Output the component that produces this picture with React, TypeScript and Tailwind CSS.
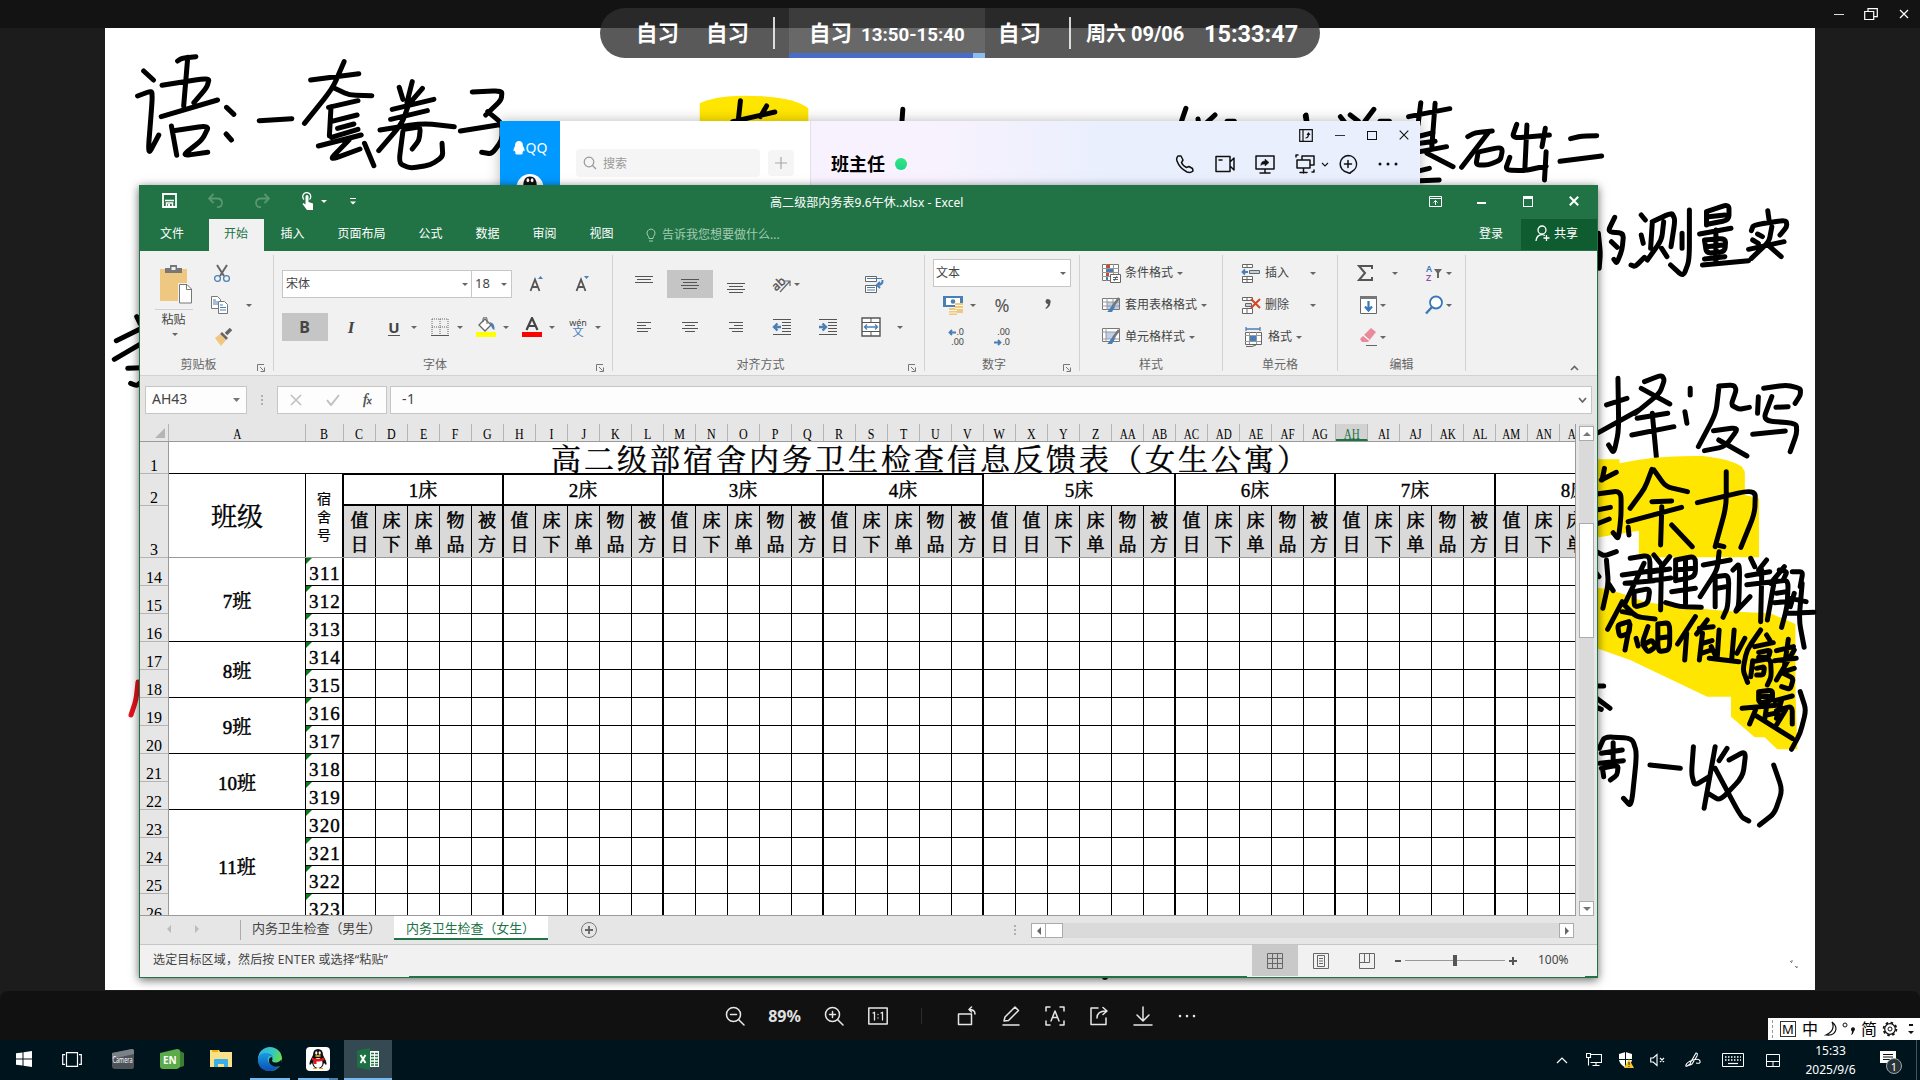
import React from "react";

const UI = "font-['Noto_Sans','Noto_Sans_CJK_SC',sans-serif]";
const SONG = "font-['Liberation_Serif','Noto_Serif_CJK_SC','Noto_Sans_CJK_SC',serif]";

/* ---------- handwriting ---------- */

function strokePath(s: string) {
  const p = s.split(" ").map((q) => q.split(",").map(Number));
  let d = `M${p[0][0]} ${p[0][1]}`;
  for (let i = 1; i < p.length - 1; i++) {
    const [a, b, c] = [p[i - 1], p[i], p[i + 1]];
    const k = 0.3;
    d += `L${b[0] + (a[0] - b[0]) * k} ${b[1] + (a[1] - b[1]) * k}`;
    d += `Q${b[0]} ${b[1]} ${b[0] + (c[0] - b[0]) * k} ${b[1] + (c[1] - b[1]) * k}`;
  }
  const e = p[p.length - 1];
  return d + `L${e[0]} ${e[1]}`;
}

function Ink({ list, color = "#000", width = 5 }: { list: string; color?: string; width?: number }) {
  return (
    <path
      d={list.split("|").map(strokePath).join("")}
      fill="none"
      stroke={color}
      strokeWidth={width}
      strokeLinecap="round"
      strokeLinejoin="round"
      vectorEffect="non-scaling-stroke"
    />
  );
}

const NOTE_LEFT = [
  "107,213 131,240|92,288 127,272 128,300 117,468 144,405|190,183 200,175 235,170|215,172 205,318|152,256 268,233 262,262 230,308|150,350 288,300|175,378 188,466|180,392 268,376 250,420 200,468 264,457",
  "310,322 328,343|309,402 322,420|390,362 470,356",
  "516,240 634,221|598,185 570,265 501,370|575,265 610,285 666,287|566,320 562,408|560,322 632,302|565,365 630,345|582,385 622,372|567,412 632,388|535,438 640,405|610,420 560,482 637,447|648,430 671,497",
  "733,262 742,298|765,245 752,308|790,265 760,308|716,328 818,298|712,358 802,332|760,300 740,370 683,452|686,390 790,370 868,380|745,388 785,380 782,420 765,447|742,395 732,490 760,505 810,495 840,470 838,430",
  "912,276 985,272 983,300 945,345|950,335 985,370 985,420 960,462 935,457|883,393 990,372",
  "40,1022 102,985|90,950 98,970|35,1078 102,1030|68,1105 102,1103|75,1150 90,1157 102,1145",
].join("|");

const NOTE_TOP =
  "331,302 326,368|385,318 372,350|315,365 402,336|666,328 664,368|1250,325 1240,368|1275,357 1276,368|1310,345 1293,368|1335,364 1350,364|1498,345 1500,368";

const NOTE_RIGHT = [
  "62,348 65,366|148,350 158,366|172,345 192,364|230,328 208,364|245,364 268,364",
  "345,308 338,375|380,310 372,440|315,350 416,326|343,408 375,398|343,455 408,440|343,430 380,424|360,460 424,500|343,512 366,505|343,542 390,540",
  "460,410 478,398 520,393|510,398 445,502|485,460 480,495 510,495 540,480 545,450 538,442 490,455",
  "580,373 568,415 660,405|605,375 600,505|650,385 642,440|563,472 552,510 600,512 652,498|652,455 648,540",
  "712,416 740,408 776,407|686,484 788,468",
  "820,652 803,695 842,700 838,750 825,790 818,778|812,725 826,742|780,700 785,760 782,805",
  "885,645 895,660|885,705 890,730|860,795 870,800 893,772|912,670 908,745|912,665 960,638 968,660 958,740|940,665 935,720 900,780|935,745 948,770|985,700 985,745|1003,630 1003,780 988,830 957,795",
  "1045,635 1045,675|1045,635 1100,612 1100,660 1050,672|1050,650 1090,645|1028,702 1105,685|1040,720 1045,760 1090,755 1092,715 1040,720|1045,740 1085,735|1068,690 1068,790|1040,777 1090,770|1035,795 1148,782",
  "1195,632 1198,658|1155,692 1160,675 1240,660 1242,680 1225,705|1170,702 1182,710|1158,720 1172,730|1205,680 1198,725 1155,775|1148,748 1235,725|1200,740 1228,770",
  "828,1135 830,1290 818,1360 805,1335|800,1215 850,1195|780,1298 880,1230|893,1145 935,1125 942,1140 930,1180 870,1240|885,1165 955,1212|875,1255 950,1240|862,1305 965,1280|912,1240 922,1370",
  "1005,1165 1005,1185|992,1235 997,1270|1075,1165 1068,1240 1025,1340|1075,1158 1112,1155 1118,1170 1105,1215 1125,1228 1150,1222|1062,1292 1125,1282 1090,1340 1040,1352|1075,1320 1144,1368",
  "1172,1190 1170,1240|1185,1165 1240,1155 1275,1165 1275,1185 1262,1210|1205,1190 1183,1262 1265,1270 1266,1300 1250,1355|1215,1222 1245,1220|1158,1303 1238,1293",
].join("|");

const NOTE_LOW = [
  "770,145 764,180|762,180 800,157|750,222 812,212 812,290 805,358 792,338|750,270 785,262|750,312 782,297",
  "890,148 872,205 835,265|895,150 925,200 980,215|890,245 940,243|830,305 965,262|915,260 912,375|830,322 832,345|940,315 992,380",
  "1078,155 1078,260 1050,380|1005,248 1152,207 1150,280 1115,382|1055,375 1072,380",
  "750,395 770,408 800,395|775,420 780,490 766,565|780,490 792,512|750,460 756,470",
  "835,415 885,405 885,480|815,465 905,450|822,490 895,482|870,430 820,555|845,515 885,505 880,550 845,562 845,515",
  "895,405 912,430|935,410 915,440|890,455 935,447|888,482 938,474|914,440 912,570",
  "950,420 950,482|950,420 1000,408 1000,470 950,482|950,450 995,445|975,415 975,550|940,515 1000,505|925,548 960,560 1015,562",
  "1020,435 1088,420|1060,395 1055,450 1012,530|1050,470 1050,560|1050,470 1085,465 1082,560 1070,592|1055,505 1078,500",
  "1095,450 1112,430 1110,555 1100,578 1138,530|1140,415 1150,440|1180,420 1160,450|1130,467 1188,455|1130,494 1195,485|1168,450 1165,605",
  "1225,440 1190,490|1212,450 1232,455 1222,480|1200,480 1182,600|1200,485 1235,480 1232,560 1218,622|1205,520 1230,515|1200,548 1230,545|1245,455 1272,455 1265,500|1250,520 1240,560|1240,535 1280,545|1235,580 1300,577|1270,490 1262,600 1275,682",
  "815,545 778,628|818,552 850,590 898,597|815,575 838,580",
  "832,605 803,615 808,650 832,640 835,608 830,640 822,690|850,655 855,678|880,620 865,670 880,697 900,680 890,660 868,675|905,612 905,695 935,690 935,608 905,612|905,655 932,650",
  "1000,590 955,672|978,640 973,720|1030,600 1003,642|1010,625 1045,620|1018,640 1010,720|1018,670 1042,662|1015,700 1040,690",
  "1060,630 1055,715|1098,630 1092,715|1040,680 1050,705|1125,655 1105,700|1035,715 1110,725",
  "1165,630 1130,690 1120,750 1132,787|1180,645 1188,660|1150,680 1197,668|1160,697 1190,690 1185,712 1160,712|1145,722 1140,770|1145,725 1190,715 1192,770 1182,795|1155,745 1175,740 1172,765 1155,765",
  "1235,658 1225,740|1205,692 1248,680|1200,722 1255,715|1250,690 1205,780|1218,757 1250,745|1222,760 1248,775 1240,808 1218,800",
  "1160,815 1160,850 1195,840 1195,810 1160,815|1165,830 1190,828|1118,865 1212,855|1180,860 1175,900|1152,870 1137,912|1150,885 1245,955|1200,842 1245,828|1218,840 1205,895|1205,872 1245,858 1245,912|1228,870 1205,915|1180,885 1200,880",
  "1265,815 1280,870 1265,940 1243,988|750,798 768,798|750,835 784,865|750,862 762,868",
  "757,985 770,950 840,955 852,1000 838,1160 818,1135|762,1000 815,990|792,968 792,1028|758,1030 818,1022|765,1045 768,1070|762,1045 805,1035 802,1065 785,1080",
  "885,1035 962,1045|995,980 990,1060 998,1097 1035,1070|1050,980 1022,1165|1080,985 1060,1022|1085,1020 1128,992 1120,1070 1062,1142 1032,1120|1050,1045 1115,1190 1135,1203",
  "1198,1035 1220,1110 1200,1180 1162,1215",
].join("|");

function Whiteboard() {
  return (
    <svg className="absolute left-0 top-0" width="1920" height="990" viewBox="0 0 1920 990">
      <g transform="translate(580 0) scale(0.48471 0.33333)">
        <path d="M247 370V310Q275 288 340 287Q440 288 471 325V370Z" fill="#ffe600" />
        <Ink list={NOTE_TOP} width={5} />
      </g>
      <g transform="translate(100 0) scale(0.40816 0.33333)">
        <Ink list={NOTE_LEFT} />
      </g>
      <g transform="translate(1280 0) scale(0.40816 0.33333)">
        <Ink list={NOTE_RIGHT} />
      </g>
      <g transform="translate(1300 420) scale(0.3954 0.33333)">
        <path d="M740 118H808V130Q900 105 1020 108Q1090 118 1118 140L1125 155V225L1161 235V412H857V332L740 355Z" fill="#ffe600" />
        <path d="M740 500Q800 510 870 545Q1000 570 1190 580L1253 612V810L1258 988H1207L1175 952H1150L1090 890V830H1030L835 720L740 680Z" fill="#ffe600" />
        <Ink list={NOTE_LOW} />
      </g>
      <Ink list="138,682 136,700 131,715" color="#e0141c" width={5} />
      <Ink list="1104,978 1106,978" width={3.5} />
      <path d="M1790 961l2 2M1795 966l2 2M1791 961h2M1797 966v2" stroke="#777" fill="none" />
    </svg>
  );
}

/* ---------- shared bits ---------- */

const Arrow = ({ c = "#666" }: { c?: string }) => (
  <svg width="6" height="3" viewBox="0 0 6 3" className="shrink-0">
    <path d="M0 0h6L3 3z" fill={c} />
  </svg>
);

const Lines = ({ rows, dy = 0 }: { rows: [number, number][]; dy?: number }) => (
  <svg width="20" height="20" viewBox="0 0 20 20">
    {rows.map(([x, w], i) => (
      <rect key={i} x={x} y={3 + dy + i * 3} width={w} height="1" fill="#555" />
    ))}
  </svg>
);

function I({ w = 20, h = 20, children }: { w?: number; h?: number; children: React.ReactNode }) {
  return (
    <svg width={w} height={h} viewBox={`0 0 ${w} ${h}`} fill="none" className="shrink-0">
      {children}
    </svg>
  );
}

const Cell = ({ children, on }: { children?: React.ReactNode; on?: boolean }) => (
  <div className={`flex h-7 w-[46px] shrink-0 items-center justify-center ${on ? "bg-[#c5c5c5]" : ""}`}>{children}</div>
);

const Drop = ({ children }: { children: React.ReactNode }) => (
  <div className="flex h-7 w-[46px] shrink-0 items-center pl-[5px]">
    <div className="flex w-[30px] justify-center">{children}</div>
    <div className="flex w-[10px] justify-center">
      <Arrow />
    </div>
  </div>
);

function Group({ label, width, launcher, children }: { label: string; width: string; launcher?: boolean; children: React.ReactNode }) {
  return (
    <div className={`relative flex h-[124px] shrink-0 flex-col ${width}`}>
      <div className="h-[105px]">{children}</div>
      <div className={`flex h-[18px] items-center justify-center text-[12px] leading-none text-[#666] ${launcher ? "pr-[17px]" : "pr-[1px]"}`}>{label}</div>
      <div className="absolute right-0 top-1 h-[116px] w-px bg-[#d2d2d2]" />
      {launcher && (
        <div className="absolute bottom-[3px] right-[9px]">
          <I w={8} h={8}>
            <path d="M.5 7V.5H7M3 3l3.500 3.500M7.500 3.500v4h-4" stroke="#777" />
          </I>
        </div>
      )}
    </div>
  );
}

/* ---------- ribbon ---------- */

const BrushOverlay = () => (
  <>
    <path d="M18 3l-6 8" stroke="#777" strokeWidth="2.6" />
    <path d="M12 10l2 2-3 5H6c2-1 3-5 6-7z" fill="#4a7fb5" />
  </>
);

function Ribbon() {
  return (
    <div className="flex h-[124px] bg-[#f1f1f1] text-[12px] text-[#444]">
      <Group label="剪贴板" width="w-[134px]" launcher>
        <div className="flex h-full">
          <div className="flex w-[67px] flex-col items-center pt-[13px]">
            <I w={36} h={40}>
              <path d="M4 5h27v32H4z" fill="#eec781" />
              <path d="M9 9V4h5V1h7v3h5v5z" fill="#777" />
              <path d="M15.500 3h4v3h-4z" fill="#f1f1f1" />
              <path d="M22 19h10l5 5v16H22z" fill="#f1f1f1" />
              <path d="M23.500 20.500h7.500l4.500 4.500v14h-12z" fill="#fff" stroke="#777" />
              <path d="M30.500 20.500v5h5" stroke="#777" />
            </I>
            <div className="mt-[5px] h-px w-[38px] bg-[#d0d0d0]" />
            <div className="mt-[3px] leading-[14px]">粘贴</div>
            <div className="mt-[6px] pl-[3px]">
              <Arrow />
            </div>
          </div>
          <div className="flex flex-col gap-3 pl-[5px] pt-[12px]">
            <I w={20}>
              <path d="M5 2l7 11M15 2L8 13" stroke="#666" strokeWidth="2" />
              <circle cx="5.500" cy="15.500" r="2.900" stroke="#4a7fb5" strokeWidth="1.300" />
              <circle cx="14.500" cy="15.500" r="2.900" stroke="#4a7fb5" strokeWidth="1.300" />
            </I>
            <div className="-ml-[2px] flex items-center gap-[16px]">
              <I>
                <path d="M1.500 1.500h6l3 3v9h-9z" fill="#fff" stroke="#777" />
                <path d="M3 5h3M3 7h5M3 9h5" stroke="#4a7fb5" />
                <path d="M8.500 6.500h6l3 3v9h-9z" fill="#fff" stroke="#777" />
                <path d="M10 10h3M10 12.500h6M10 15h6" stroke="#4a7fb5" />
              </I>
              <Arrow />
            </div>
            <div className="pl-px">
              <I>
                <path d="M18 2l-5 5" stroke="#666" strokeWidth="3.500" />
                <path d="M9 5l6 6-2 2-6-6z" fill="#666" />
                <path d="M7 7l6 6-5 6-6-8z" fill="#eec781" />
              </I>
            </div>
          </div>
        </div>
      </Group>

      <Group label="字体" width="w-[339px]" launcher>
        <div className="flex flex-col gap-[15px] pl-2 pt-[19px]">
          <div className="flex h-7 items-center">
            <div className="flex h-7 w-[190px] items-center justify-between border border-[#c6c6c6] bg-white px-[3px]">
              <span>宋体</span>
              <Arrow />
            </div>
            <div className="-ml-px flex h-7 w-[41px] items-center justify-between border border-[#c6c6c6] bg-white pl-[3px] pr-1 text-[13px]">
              <span>18</span>
              <Arrow />
            </div>
            <div className="flex w-[50px] justify-center">
              <I w={16} h={18}>
                <path d="M1.500 16L6 4.500 10.500 16M3 12h6" stroke="#555" strokeWidth="1.800" />
                <path d="M9 4l2.500-3L14 4z" fill="#4a7fb5" />
              </I>
            </div>
            <div className="flex w-[42px] justify-center">
              <I w={16} h={18}>
                <path d="M1.500 16L6 4.500 10.500 16M3 12h6" stroke="#555" strokeWidth="1.800" />
                <path d="M9 1l2.500 3L14 1z" fill="#4a7fb5" />
              </I>
            </div>
          </div>
          <div className="flex">
            <Cell on>
              <span className="pr-px text-[16px] font-bold leading-none text-[#444]">B</span>
            </Cell>
            <Cell>
              <span className="font-['Liberation_Serif'] text-[17px] font-bold italic leading-none">I</span>
            </Cell>
            <Drop>
              <span className="border-b border-[#555] text-[15px] font-bold leading-[16px]">U</span>
            </Drop>
            <Drop>
              <I w={18} h={18}>
                <path d="M1 1h16M1 9h16M1 1v16M9 1v16M17 1v16" stroke="#666" strokeDasharray="1 1" />
                <path d="M0 17.500h18" stroke="#555" />
              </I>
            </Drop>
            <Drop>
              <I w={20} h={20}>
                <path d="M3 8l6-6 6 6-6 6z" fill="#fff" stroke="#666" strokeWidth="1.300" />
                <path d="M7 5V2q0-2 2-2t2 2v5" stroke="#666" />
                <path d="M14 5q5 1 4.500 8Q16 12 15 9z" fill="#4a7fb5" />
                <path d="M0 15h20v5H0z" fill="#ff0" />
              </I>
            </Drop>
            <Drop>
              <I w={20} h={20}>
                <path d="M4.500 13L10 1l5.500 12M6.500 9h7" stroke="#444" strokeWidth="2.200" />
                <path d="M0 15h20v5H0z" fill="#f00" />
              </I>
            </Drop>
            <Drop>
              <div className="flex flex-col items-center">
                <span className="text-[9px] leading-[9px]">wén</span>
                <span className="text-[11px] leading-[10px] text-[#3a78b8]">文</span>
              </div>
            </Drop>
          </div>
        </div>
      </Group>

      <Group label="对齐方式" width="w-[312px]" launcher>
        <div className="flex flex-col gap-[15px] pl-2 pt-[19px]">
          <div className="flex">
            <Cell><Lines dy={-1} rows={[[1, 18], [3, 14], [1, 18]]} /></Cell>
            <Cell on><Lines dy={2} rows={[[1, 18], [3, 14], [1, 18], [3, 14]]} /></Cell>
            <Cell><Lines dy={6} rows={[[1, 18], [3, 14], [1, 18], [3, 14]]} /></Cell>
            <div className="flex h-7 w-[46px] items-center pl-[13px]">
              <I w={20} h={20}>
                <text x="1" y="14" transform="rotate(-42 7 12)" fontSize="12" fill="#555" fontFamily="Noto Sans" stroke="#555" strokeWidth=".4">ab</text>
                <path d="M8 18L18 7M13 7h5v5" stroke="#666" strokeWidth="1.200" />
              </I>
              <div className="ml-[2px]"><Arrow /></div>
            </div>
            <Cell />
            <Cell>
              <I>
                <path d="M1.500 2.500h11v5h-11zM1.500 11.500h11v7h-11z" fill="#fff" stroke="#666" />
                <path d="M3 4.500h15M3 13.500h8M3 16h8" stroke="#4a7fb5" />
                <path d="M18.500 6q.5 5-5 5M16 8l-3 3 3 3" stroke="#4a7fb5" strokeWidth="2" />
              </I>
            </Cell>
          </div>
          <div className="flex">
            <Cell><Lines dy={2} rows={[[3, 14], [3, 9], [3, 14], [3, 11]]} /></Cell>
            <Cell><Lines dy={2} rows={[[2, 16], [5, 10], [2, 16], [5, 10]]} /></Cell>
            <Cell><Lines dy={2} rows={[[3, 14], [8, 9], [3, 14], [6, 11]]} /></Cell>
            <Cell>
              <I>
                <path d="M1 2.500h18M10 5.500h9M10 8.500h9M10 11.500h9M10 14.500h9M1 17.500h18" stroke="#555" />
                <path d="M9 10H3M5.500 6.500L2 10l3.500 3.500" stroke="#4a7fb5" strokeWidth="2.400" />
              </I>
            </Cell>
            <Cell>
              <I>
                <path d="M1 2.500h18M10 5.500h9M10 8.500h9M10 11.500h9M10 14.500h9M1 17.500h18" stroke="#555" />
                <path d="M1 10h6M4.500 6.500L8 10l-3.500 3.500" stroke="#4a7fb5" strokeWidth="2.400" />
              </I>
            </Cell>
            <div className="flex h-7 items-center gap-[16px] pl-[10px]">
              <I>
                <path d="M1 1h18v18H1z" fill="#fff" stroke="#555" strokeWidth="1.400" />
                <path d="M1 5.500h18M1 14.500h18M10 1v4M10 15v4" stroke="#555" />
                <path d="M4 10h12M6 7.500L3.500 10 6 12.500M14 7.500l2.500 2.500-2.500 2.500" stroke="#4a7fb5" strokeWidth="1.300" />
              </I>
              <Arrow />
            </div>
          </div>
        </div>
      </Group>

      <Group label="数字" width="w-[155px]" launcher>
        <div className="pl-2 pt-2">
          <div className="flex h-7 w-[138px] items-center justify-between border border-[#c6c6c6] bg-white pl-[2px] pr-1">
            <span>文本</span>
            <Arrow />
          </div>
          <div className="mt-1 flex">
            <Drop>
              <I>
                <path d="M0 1h20v11H0z" fill="#4a7fb5" />
                <path d="M3 3h14v7H3z" fill="#fff" />
                <circle cx="10" cy="6.500" r="2.300" fill="#4a7fb5" />
                <path d="M12 8h8v10h-6v2H6v-7h6z" fill="#eec781" />
                <path d="M12 10.500h8M12 13.500h8M6 15.500h8M6 18h8" stroke="#fff" strokeWidth=".8" />
              </I>
            </Drop>
            <Cell><span className="text-[18px] leading-none text-[#555]">%</span></Cell>
            <Cell>
              <I w={10} h={14}>
                <path d="M2.500 3a2.600 2.600 0 1 1 5 1.500Q7 9 3 11l-.5-1Q5 8 5 6 2.500 6 2.500 3z" fill="#555" />
              </I>
            </Cell>
          </div>
          <div className="mt-1 flex text-[9px] leading-[10px] text-[#444]">
            <div className="flex h-7 w-[46px] flex-col items-end justify-center pr-[15px]">
              <div className="flex items-center"><I w={8} h={7}><path d="M8 3.500H2M4 1L1.500 3.500 4 6" stroke="#4a7fb5" strokeWidth="1.800" /></I>.0</div>
              <div>.00</div>
            </div>
            <div className="flex h-7 w-[46px] flex-col items-end justify-center pr-[15px]">
              <div>.00</div>
              <div className="flex items-center"><I w={8} h={7}><path d="M0 3.500h6M4 1l2.500 2.500L4 6" stroke="#4a7fb5" strokeWidth="1.800" /></I>.0</div>
            </div>
          </div>
        </div>
      </Group>

      <Group label="样式" width="w-[143px]">
        <div className="flex flex-col gap-3 pl-[21px] pt-[12px]">
          <div className="flex h-5 items-center gap-1">
            <I>
              <path d="M1.500 1.500h16v16h-16z" fill="#fff" stroke="#777" />
              <path d="M5.500 1v17M12.500 1v17M1 5.500h17M1 9.500h17M1 13.500h17" stroke="#999" />
              <path d="M5 2h4v3H5zM5 10h3v3H5z" fill="#d24726" />
              <path d="M5 6h7v3H5zM5 14h2v3H5z" fill="#4a7fb5" />
              <path d="M9.500 11.500h10v8h-10z" fill="#fff" stroke="#666" />
              <path d="M12 14.500h5M12 16.500h5M16 13l-3 5" stroke="#555" strokeWidth=".9" />
            </I>
            <span>条件格式</span>
            <Arrow />
          </div>
          <div className="flex h-5 items-center gap-1">
            <I>
              <path d="M1.500 3.500h17v11h-17z" fill="#fff" stroke="#777" />
              <path d="M6 7h12v7H6z" fill="#bdd0e8" />
              <path d="M6 3v12M12 3v12M1 7h17M1 11h17" stroke="#999" />
              <BrushOverlay />
            </I>
            <span>套用表格格式</span>
            <Arrow />
          </div>
          <div className="flex h-5 items-center gap-1">
            <I>
              <path d="M1.500 1.500h17v13h-17z" fill="#fff" stroke="#777" />
              <path d="M5 5h10v7H5z" fill="#bdd0e8" />
              <path d="M5 1v14M1 5h17M1 12h17" stroke="#999" />
              <BrushOverlay />
            </I>
            <span>单元格样式</span>
            <Arrow />
          </div>
        </div>
      </Group>

      <Group label="单元格" width="w-[115px]">
        <div className="flex flex-col gap-3 pl-[18px] pt-[12px]">
          <div className="flex h-5 items-center">
            <I>
              <path d="M1.500 1.500h10v3h-10zM6 1.500v3M1.500 13.500h10v6h-10zM6 13.500v6M1.500 16.500h10" fill="#fff" stroke="#666" />
              <path d="M8.500 7.500h10v3h-10z" fill="#bdd0e8" stroke="#666" />
              <path d="M7 9H2M4 6.500L1.500 9 4 11.500" stroke="#4a7fb5" strokeWidth="1.800" />
            </I>
            <span className="ml-1">插入</span>
            <span className="ml-[21px]"><Arrow /></span>
          </div>
          <div className="flex h-5 items-center">
            <I>
              <path d="M1.500 2.500h10v3h-10zM6 2.500v3M1.500 13.500h10v5h-10zM6 13.500v5" fill="#fff" stroke="#666" />
              <path d="M4.500 8.500h6v3h-6z" fill="#bdd0e8" stroke="#666" />
              <path d="M10 4l9 9M19 4l-9 9" stroke="#d24726" strokeWidth="2" />
            </I>
            <span className="ml-1">删除</span>
            <span className="ml-[21px]"><Arrow /></span>
          </div>
          <div className="flex h-5 items-center pl-[3px]">
            <I>
              <path d="M2 2h14M2 0v4M16 0v4" stroke="#4a7fb5" strokeWidth="1.300" />
              <path d="M1.500 5.500h16v12h-16z" fill="#fff" stroke="#666" />
              <path d="M5.500 5v12M12.500 5v12M1 8.500h16M1 14.500h16" stroke="#999" />
              <path d="M6 9h6v5H6z" fill="#4a7fb5" />
              <path d="M2 19.500h6l4-1.500" stroke="#666" />
            </I>
            <span className="ml-1">格式</span>
            <span className="ml-1"><Arrow /></span>
          </div>
        </div>
      </Group>

      <Group label="编辑" width="w-[128px]">
        <div className="flex pt-[12px]">
          <div className="flex w-[82px] flex-col gap-3 pl-[18px]">
            <div className="flex h-5 items-center gap-[16px]">
              <I w={20} h={18}>
                <path d="M16 5V2H3l6 7-6 7h13v-3" stroke="#555" strokeWidth="2" />
              </I>
              <Arrow />
            </div>
            <div className="flex h-5 items-center gap-[3px] pl-[3px]">
              <I w={18}>
                <path d="M1.500 1.500h16v17h-16z" fill="#fff" stroke="#666" />
                <path d="M1 1h17v3H1z" fill="#777" />
                <path d="M9.500 6v9M6 11.500l3.500 4 3.500-4" stroke="#3a78b8" strokeWidth="2.200" />
              </I>
              <Arrow />
            </div>
            <div className="flex h-5 items-center gap-[3px] pl-[3px]">
              <I w={18}>
                <path d="M12 1l5 4-8 10-6 0-2-3z" fill="#e98a9b" />
                <path d="M4 8l6 5" stroke="#fff" strokeWidth="1.200" />
                <path d="M7 18.500h11" stroke="#666" />
              </I>
              <Arrow />
            </div>
          </div>
          <div className="flex flex-col gap-3 pl-[5px]">
            <div className="flex h-5 items-center gap-[3px]">
              <I w={18}>
                <text x="1" y="9" fontSize="9" fontWeight="600" fill="#3a78b8" fontFamily="Noto Sans">A</text>
                <text x="1" y="18" fontSize="9" fontWeight="600" fill="#8a4fa8" fontFamily="Noto Sans">Z</text>
                <path d="M9 6h8l-3 4v5h-2v-5z" fill="#666" />
              </I>
              <Arrow />
            </div>
            <div className="flex h-5 items-center gap-[3px]">
              <I w={18}>
                <circle cx="11" cy="7.500" r="6" fill="#fff" stroke="#3a78b8" strokeWidth="1.800" />
                <path d="M7 12l-6 6.500" stroke="#3a78b8" strokeWidth="2.400" />
              </I>
              <Arrow />
            </div>
          </div>
        </div>
      </Group>

      <div className="flex flex-1 items-end justify-end pb-1 pr-[18px]">
        <I w={9} h={6}><path d="M1 5l3.500-3.500L8 5" stroke="#666" strokeWidth="1.600" /></I>
      </div>
    </div>
  );
}

/* ---------- worksheet ---------- */

const COLS = "C D E F G H I J K L M N O P Q R S T U V W X Y Z AA AB AC AD AE AF AG AH AI AJ AK AL AM AN AO".split(" ");
const FIVE = ["值日", "床下", "床单", "物品", "被方"];
const BEDS = [1, 2, 3, 4, 5, 6, 7, 8].map((n) => ({ n, subs: n === 5 ? ["值日", ...FIVE] : FIVE }));
const SUBS = BEDS.flatMap((b) => b.subs.map((s, i) => ({ s, last: i === b.subs.length - 1 }))).slice(0, 39);
const ROOMS = [311, 312, 313, 314, 315, 316, 317, 318, 319, 320, 321, 322, 323];
const CLASSES = [
  { n: "7班", h: "h-[84px]" },
  { n: "8班", h: "h-[56px]" },
  { n: "9班", h: "h-[56px]" },
  { n: "10班", h: "h-[56px]" },
  { n: "11班", h: "h-[112px]" },
];

const RowHead = ({ n, h }: { n: number; h: string }) => (
  <div className={`flex shrink-0 items-end justify-center border-b border-[#b5b5b5] text-[16px] leading-[14px] ${h}`}>{n}</div>
);

function Sheet() {
  return (
    <div className="flex h-[492px] bg-[#e6e6e6]">
      <div className={`flex h-full w-[1436px] flex-col overflow-hidden border-b border-r border-[#9a9a9a] text-black ${SONG}`}>
        <div className="flex h-[18px] shrink-0 border-b border-[#9a9a9a] text-[15px] leading-[20px]">
          <div className="flex w-[29px] shrink-0 items-end justify-end border-r border-[#b5b5b5] pb-[3px] pr-[3px]">
            <I w={10} h={10}><path d="M10 0v10H0z" fill="#b5b5b5" /></I>
          </div>
          <div className="w-[137px] shrink-0 border-r border-[#b5b5b5] text-center"><span className="inline-block scale-x-[0.75]">A</span></div>
          <div className="w-[38px] shrink-0 border-r border-[#b5b5b5] text-center"><span className="inline-block scale-x-[0.8]">B</span></div>
          {COLS.map((c) => (
            <div
              key={c}
              className={`w-8 shrink-0 overflow-hidden border-r border-[#b5b5b5] text-center ${c === "AH" ? "border-b-2 border-b-[#217346] bg-[#d2d2d2] text-[#217346]" : ""}`}
            >
              <span className={c.length > 1 ? "-mx-1 inline-block scale-x-[0.74]" : "inline-block scale-x-[0.8]"}>{c}</span>
            </div>
          ))}
        </div>
        <div className="flex flex-1 overflow-hidden">
          <div className="flex w-[29px] shrink-0 flex-col border-r border-[#9a9a9a]">
            <RowHead n={1} h="h-8" />
            <RowHead n={2} h="h-8" />
            <RowHead n={3} h="h-[52px]" />
            {ROOMS.map((r, i) => (
              <RowHead key={r} n={14 + i} h="h-7" />
            ))}
          </div>
          <div className="flex shrink-0 flex-col bg-white">
            <div className="flex h-8 shrink-0 overflow-hidden whitespace-nowrap border-b border-black pl-[382px] text-[30px] leading-[35px] tracking-[3px] [-webkit-text-stroke:0.4px]">
              高二级部宿舍内务卫生检查信息反馈表（女生公寓）
            </div>
            <div className="flex h-[84px] shrink-0 border-b border-[#9a9a9a]">
              <div className="flex w-[137px] items-center justify-center border-r border-black pt-1 text-[26px] leading-none [-webkit-text-stroke:0.4px]">班级</div>
              <div className="flex w-[38px] items-center justify-center border-r-2 border-black text-center font-['Noto_Sans_CJK_SC'] text-[14px] leading-[18px] [-webkit-text-stroke:0.2px]">
                <span className="w-4">宿舍号</span>
              </div>
              <div className="-mt-px flex flex-col">
                <div className="flex h-[33px]">
                  {BEDS.map((b) => (
                    <div
                      key={b.n}
                      className={`flex shrink-0 items-center justify-center border-r-2 border-black pt-[2px] text-[19px] leading-none [-webkit-text-stroke:0.4px] ${b.n === 5 ? "w-[192px]" : "w-[160px]"} ${b.n < 5 ? "border-y-2" : "border-y"}`}
                    >
                      {b.n}床
                    </div>
                  ))}
                </div>
                <div className="flex flex-1 bg-[#d9d9d9] text-[18px] leading-6 [-webkit-text-stroke:0.6px]">
                  {SUBS.map((c, i) => (
                    <div key={i} className={`flex w-8 shrink-0 items-center justify-center border-black pt-[2px] text-center ${c.last ? "border-r-2" : "border-r"}`}>
                      <span className="w-[18px]">{c.s}</span>
                    </div>
                  ))}
                </div>
              </div>
            </div>
            <div className="flex">
              <div className="flex w-[137px] flex-col border-r border-black">
                {CLASSES.map((c) => (
                  <div key={c.n} className={`flex items-center justify-center border-b border-black pt-[3px] text-[19px] leading-none [-webkit-text-stroke:0.5px] ${c.h}`}>
                    {c.n}
                  </div>
                ))}
              </div>
              <div className="flex flex-col">
                {ROOMS.map((r) => (
                  <div key={r} className="flex h-7 border-b border-black">
                    <div className="relative flex w-[38px] items-center justify-center border-r-2 border-black pl-[2px] pt-[3px] text-[19px] leading-none tracking-[1.200px] [-webkit-text-stroke:0.4px]">
                      <svg className="absolute left-0 top-0" width="6" height="6"><path d="M0 0h6L0 6z" fill="#0a7a1a" /></svg>
                      {r}
                    </div>
                    {SUBS.map((c, i) => (
                      <div key={i} className={`w-8 shrink-0 border-black ${c.last ? "border-r-2" : "border-r"}`} />
                    ))}
                  </div>
                ))}
              </div>
            </div>
          </div>
        </div>
      </div>
      <div className="ml-[3px] flex w-[15px] flex-col bg-[#dadada]">
        <div className="mt-[2px] flex h-[15px] items-center justify-center border border-[#ababab] bg-white">
          <I w={8} h={4}><path d="M0 4h8L4 0z" fill="#777" /></I>
        </div>
        <div className="mt-[82px] h-[115px] border border-[#ababab] bg-white" />
        <div className="mt-auto flex h-[15px] items-center justify-center border border-[#ababab] bg-white">
          <I w={8} h={4}><path d="M0 0h8L4 4z" fill="#777" /></I>
        </div>
      </div>
    </div>
  );
}

function SheetTabs() {
  return (
    <div className="flex h-[29px] border-b border-[#c6c6c6] bg-[#e6e6e6] text-[13px] leading-[25px] text-[#444]">
      <div className="flex w-[100px] items-center gap-[23px] pb-[3px] pl-[27px]">
        <I w={5} h={8}><path d="M4 0v8L0 4z" fill="#bbb" /></I>
        <I w={5} h={8}><path d="M0 0v8l4-4z" fill="#bbb" /></I>
      </div>
      <div className="mt-1 h-5 w-px bg-[#ababab]" />
      <div className="w-[153px] whitespace-nowrap pl-[11px] tracking-[-0.1px]">内务卫生检查（男生）</div>
      <div className="h-6 w-[154px] whitespace-nowrap border-b-2 border-[#217346] bg-white pl-[12px] tracking-[-0.1px] text-[#217346]">
        内务卫生检查（女生）
      </div>
      <div className="flex w-[82px] items-center justify-center">
        <I w={18} h={18}>
          <circle cx="9" cy="9" r="7.500" stroke="#777" />
          <path d="M9 5v8M5 9h8" stroke="#666" strokeWidth="1.800" />
        </I>
      </div>
      <div className="flex flex-1 items-center justify-end pr-[15px]">
        <I w={2} h={10}><path d="M0 0h2v2H0zM0 4h2v2H0zM0 8h2v2H0z" fill="#b0b0b0" /></I>
      </div>
      <div className="mr-[23px] mt-[7px] flex h-[15px] w-[543px] bg-[#dadada]">
        <div className="flex w-[15px] items-center justify-center border border-[#ababab] bg-white">
          <I w={4} h={8}><path d="M4 0v8L0 4z" fill="#666" /></I>
        </div>
        <div className="w-[17px] border border-l-0 border-[#ababab] bg-white" />
        <div className="ml-auto flex w-[15px] items-center justify-center border border-[#ababab] bg-white">
          <I w={4} h={8}><path d="M0 0v8l4-4z" fill="#666" /></I>
        </div>
      </div>
    </div>
  );
}

function StatusBar() {
  return (
    <div className="flex h-[31px] items-stretch bg-[#f1f1f1] text-[12px] leading-[29px] text-[#444]">
      <div className="flex-1 pl-[13px] tracking-[0.150px]">选定目标区域，然后按 ENTER 或选择“粘贴”</div>
      <div className="flex w-[46px] items-center justify-center bg-[#c9c9c9]">
        <I w={16} h={16}><path d="M.5.500h15v15H.5zM5.500.5v15M10.500.5v15M.5 5.500h15M.5 10.500h15" stroke="#666" /></I>
      </div>
      <div className="flex w-[46px] items-center justify-center">
        <I w={16} h={16}><path d="M.5.500h15v15H.5zM4.500 2.500h7v11h-7zM6 5.500h4M6 8h4M6 10.500h4" stroke="#666" /></I>
      </div>
      <div className="flex w-[46px] items-center justify-center">
        <I w={16} h={16}><path d="M.5.500h15v15H.5zM5.500.5v9M10.500.5v9M.5 9.500h10" stroke="#666" /></I>
      </div>
      <div className="flex items-center pl-[5px]">
        <div className="h-[2px] w-[6px] bg-[#555]" />
        <div className="ml-1 flex h-[11px] w-[100px] items-center">
          <div className="h-px w-[48px] bg-[#999]" />
          <div className="h-[11px] w-1 bg-[#555]" />
          <div className="h-px flex-1 bg-[#999]" />
        </div>
        <div className="ml-1"><I w={8} h={8}><path d="M4 0v8M0 4h8" stroke="#555" strokeWidth="2" /></I></div>
      </div>
      <div className="w-[80px] pl-[21px]">100%</div>
    </div>
  );
}

/* ---------- Excel window ---------- */

const TABS: [string, string][] = [
  ["插入", "w-[57px]"],
  ["页面布局", "w-[81px]"],
  ["公式", "w-[57px]"],
  ["数据", "w-[57px]"],
  ["审阅", "w-[57px]"],
  ["视图", "w-[57px]"],
];

function ExcelWindow() {
  return (
    <div className={`absolute left-[139px] top-[185px] flex h-[793px] w-[1459px] flex-col border-x border-[#217346] bg-[#e6e6e6] shadow-[0_2px_9px_rgba(0,0,0,0.6)] ${UI}`}>
      <div className="flex h-[34px] shrink-0 items-center bg-[#217346] pb-[2px]">
        <div className="flex w-[230px] items-center pl-[22px]">
          <I w={16} h={16}>
            <path d="M1 1h13v13H1z" stroke="#fff" strokeWidth="1.800" />
            <path d="M3 7.500h9M4.500 14v-4h6v4" stroke="#fff" strokeWidth="1.500" />
            <path d="M6 11h2v3H6z" fill="#fff" />
          </I>
          <div className="ml-[30px]"><I w={16} h={16}><path d="M1 5.500h8q5 0 5 4.500t-5 4M5.500 1L1 5.500 5.500 10" stroke="#5a9674" strokeWidth="1.800" /></I></div>
          <div className="ml-[30px]"><I w={16} h={16}><path d="M15 5.500H7q-5 0-5 4.500t5 4M10.500 1L15 5.500 10.500 10" stroke="#5a9674" strokeWidth="1.800" /></I></div>
          <div className="ml-[31px]">
            <I w={14} h={18}>
              <path d="M3 7.500a4 4 0 1 1 5.500 0" stroke="#fff" strokeWidth="1.300" />
              <path d="M4.500 4q1.500-2 3 0v6l4.500 1.500V18H6L1.500 12l1-1 2 1.500z" fill="#fff" />
            </I>
          </div>
          <div className="ml-[6px]"><Arrow c="#fff" /></div>
          <div className="ml-[23px]"><I w={6} h={7}><path d="M0 .5h6" stroke="#fff" /><path d="M0 3.500h6l-3 3z" fill="#fff" /></I></div>
        </div>
        <div className="flex-1 whitespace-nowrap pl-[400px] pt-1 text-[12px] tracking-[0.080px] text-white">高二级部内务表9.6午休..xlsx - Excel</div>
        <div className="flex items-center text-white">
          <I w={13} h={11}><path d="M.5.500h12v10H.5zM.5 2.500h12M6.500 9V4.500M4.500 6.500l2-2 2 2" stroke="#fff" /></I>
          <div className="ml-[35px] mt-[3px] h-[2px] w-[9px] bg-white" />
          <div className="ml-[37px] h-[11px] w-[10px] border border-t-[3px] border-white" />
          <div className="ml-[36px] mr-[18px]"><I w={10} h={10}><path d="M.8.8l8.400 8.400M9.200.8L.8 9.200" stroke="#fff" strokeWidth="2" /></I></div>
        </div>
      </div>
      <div className="flex h-8 shrink-0 bg-[#217346] text-[12px] leading-[30px] text-white">
        <div className="w-[69px] pr-[5px] text-center">文件</div>
        <div className="w-[55px] bg-[#f1f1f1] pr-px text-center text-[#217346]">开始</div>
        {TABS.map(([t, w]) => (
          <div key={t} className={`text-center ${w}`}>{t}</div>
        ))}
        <div className="flex flex-1 items-center pb-px pl-[16px] text-[#a3cbb3]">
          <I w={10} h={14}>
            <path d="M3 10.500Q3 8.500 1.500 7a4 4 0 1 1 7 0Q7 8.500 7 10.500zM3 13h4" stroke="#a3cbb3" />
          </I>
          <span className="ml-[6px]">告诉我您想要做什么...</span>
        </div>
        <div className="w-[42px]">登录</div>
        <div className="mb-px flex w-[76px] items-center bg-[#0e5c2f] pb-[2px] pl-[14px]">
          <I w={15} h={17}>
            <circle cx="7" cy="5" r="4" stroke="#fff" strokeWidth="1.300" />
            <path d="M1 16q.5-6 6-6.500M7 9.500l3 1M11.500 10v6M8.500 13h6" stroke="#fff" strokeWidth="1.300" />
          </I>
          <span className="ml-1">共享</span>
        </div>
      </div>
      <Ribbon />
      <div className="flex h-[49px] shrink-0 items-start border-t border-[#d2d2d2] pl-[5px] pt-[10px] text-[14px] leading-[24px] text-[#444]">
        <div className="flex h-7 w-[102px] items-center justify-between border border-[#c6c6c6] bg-[#fdfdfd] px-[6px]">
          <span className="pb-[2px]">AH43</span>
          <I w={7} h={4}><path d="M0 0h7L3.500 4z" fill="#777" /></I>
        </div>
        <div className="flex h-7 w-[30px] items-center justify-center">
          <I w={2} h={10}><path d="M0 0h2v2H0zM0 4h2v2H0zM0 8h2v2H0z" fill="#b0b0b0" /></I>
        </div>
        <div className="flex h-7 w-[110px] items-center border border-[#c6c6c6] bg-[#fdfdfd] pl-[12px]">
          <I w={12} h={12}><path d="M1 1l10 10M11 1L1 11" stroke="#c0c0c0" strokeWidth="1.600" /></I>
          <div className="ml-[24px]"><I w={14} h={12}><path d="M1 6l4 5 8-10" stroke="#c0c0c0" strokeWidth="2" /></I></div>
          <span className="ml-[23px] pb-[2px] font-['Liberation_Serif'] text-[15px] italic tracking-[-0.500px] text-[#444] [-webkit-text-stroke:0.3px]">f<span className="text-[11px]">x</span></span>
        </div>
        <div className="ml-[3px] flex h-7 w-[1202px] items-center justify-between border border-[#c6c6c6] bg-[#fdfdfd] pl-[11px] pr-[4px]">
          <span className="pb-[2px] tracking-[0.500px]">-1</span>
          <I w={9} h={7}><path d="M1 1l3.500 4L8 1" stroke="#666" strokeWidth="1.800" /></I>
        </div>
      </div>
      <div className="shrink-0"><Sheet /></div>
      <div className="shrink-0"><SheetTabs /></div>
      <div className="shrink-0"><StatusBar /></div>
      <div className="flex h-[2px] shrink-0 border-b border-[#217346]">
        <div className="w-[269px] bg-[#f1f1f1]" />
        <div className="w-[838px] bg-[#217346]" />
        <div className="flex-1 bg-[#f1f1f1]" />
        <div className="w-[12px] bg-[#217346]" />
      </div>
    </div>
  );
}

/* ---------- QQ window ---------- */

const Sq = ({ children, m = "" }: { children: React.ReactNode; m?: string }) => (
  <svg width="20" height="20" viewBox="0 0 20 20" fill="none" stroke="#111" strokeWidth="1.500" strokeLinecap="round" strokeLinejoin="round" className={`shrink-0 ${m}`}>
    {children}
  </svg>
);

function QQWindow() {
  return (
    <div className={`absolute left-[500px] top-[121px] flex h-[80px] w-[920px] bg-white shadow-[0_0_12px_rgba(0,0,0,0.28)] ${UI}`}>
      <div className="flex w-[60px] flex-col items-center bg-[#0099ff] text-white">
        <div className="mt-5 flex h-[15px] items-center gap-[1px] text-[14px] leading-none">
          <I w={12} h={14}><path d="M6 0c3 0 4 2.500 4 5 1 2 2 3.500 1.500 5q-.5.500-1-.5l-1 2q1 1.500-1 2H3.500q-2-.5-1-2l-1-2q-.5 1-1 .5Q0 8.500 2 5c0-2.500 1-5 4-5z" fill="#fff" /></I>
          QQ
        </div>
        <svg width="32" height="32" viewBox="0 0 32 32" className="mt-[19px]">
          <circle cx="16" cy="16" r="16" fill="#fff" />
          <path d="M8 14q0-11 8-11t8 11z" fill="#111" />
          <ellipse cx="13.500" cy="7.500" rx="1.600" ry="2.400" fill="#fff" />
          <ellipse cx="18.500" cy="7.500" rx="1.600" ry="2.400" fill="#fff" />
        </svg>
      </div>
      <div className="flex w-[251px] items-start gap-2 border-r border-[#e4e0ea] pl-4 pt-7">
        <div className="flex h-7 w-[184px] items-center rounded-[4px] bg-[#f5f5f5] pl-[7px] text-[12px] text-[#999]">
          <I w={14} h={14}>
            <circle cx="6" cy="6" r="4.800" stroke="#999" strokeWidth="1.200" />
            <path d="M9.500 9.500L13 13" stroke="#999" strokeWidth="1.200" />
          </I>
          <span className="ml-[6px] pt-[2px]">搜索</span>
        </div>
        <div className="mt-px flex h-[26px] w-[26px] items-center justify-center rounded-[4px] bg-[#f5f5f5]">
          <I w={12} h={12}><path d="M6 0v12M0 6h12" stroke="#aaa" strokeWidth="1.200" /></I>
        </div>
      </div>
      <div className="flex flex-1 flex-col bg-gradient-to-r from-[#f8f2fe] from-20% to-[#e9effd] to-50%">
        <div className="flex h-7 items-center justify-end gap-[22px] pr-[11px]">
          <I w={14} h={13}><path d="M.7.7h12.600v11.600H.7zM4 .7v11.600M6.500 9q3 0 3-4M8 6l1.500-2L11 6" stroke="#111" strokeWidth="1.200" /></I>
          <div className="h-px w-[10px] bg-[#333]" />
          <div className="h-[9px] w-[10px] border border-[#111]" />
          <I w={10} h={10}><path d="M.7.700l8.600 8.600M9.300.7L.7 9.300" stroke="#111" strokeWidth="1.100" /></I>
        </div>
        <div className="flex h-[30px] items-center pl-[20px]">
          <span className="text-[18px] font-bold leading-none text-black">班主任</span>
          <div className="ml-[10px] h-3 w-3 rounded-full bg-gradient-to-b from-[#35e57f] to-[#14d68c]" />
          <div className="flex-1" />
          <Sq m="mr-5"><path d="M3 2q-2 2-1 5 2.500 7 10 11 3.500 1.200 6-1l-.5-2.500-3.500-2-2.500 1q-4-2-5-5L8 6 6 2z" /></Sq>
          <Sq m="mr-5"><path d="M1 2.500h14v15H1zM15 8l4-4v12l-4-4M4 6h3" /></Sq>
          <Sq m="mr-5"><path d="M1 2h18v13H1zM10 15v4M5 19h10" /><path d="M6 11q0-4 4-4V5l4 3.500L10 12v-2q-2.500 0-4 1z" fill="#111" strokeWidth=".5" /></Sq>
          <Sq m="mr-[6px]"><path d="M7 5V2h12v9h-3M2 6h13v8H2zM8.500 14v5M5 18.500h7M1 3V1h2M19 16v2h-2" /></Sq>
          <I w={8} h={5}><path d="M1 1l3 3 3-3" stroke="#111" strokeWidth="1.100" /></I>
          <Sq m="ml-[9px]"><path d="M10 1.500a8.500 8.500 0 0 1 4 16q-2 1-2 2l-3-1.200A8.500 8.500 0 0 1 10 1.500zM10 6.500v7M6.500 10h7" /></Sq>
          <div className="ml-[20px] mr-[22px]"><I w={20} h={4}><circle cx="2" cy="2" r="1.500" fill="#111" /><circle cx="10" cy="2" r="1.500" fill="#111" /><circle cx="18" cy="2" r="1.500" fill="#111" /></I></div>
        </div>
      </div>
    </div>
  );
}

/* ---------- schedule pill ---------- */

function SchedulePill() {
  return (
    <div className="absolute left-[600px] top-2 flex h-[50px] w-[720px] overflow-hidden whitespace-nowrap rounded-[25px] bg-[rgba(48,48,48,0.8)] font-['Roboto','Noto_Sans_CJK_SC',sans-serif] text-[21.500px] font-bold leading-[52px] text-white">
      <div className="w-[70px] pl-[36px]">自习</div>
      <div className="w-[103px] pl-[36px]">自习</div>
      <div className="mt-[9px] h-8 w-[2px] bg-white/80" />
      <div className="ml-[14px] flex w-[196px] flex-col bg-white/[0.09]">
        <div className="flex h-[45px] items-baseline pl-[20px] leading-[52px]">
          自习<span className="ml-[9px] pt-px text-[18.700px]">13:50-15:40</span>
        </div>
        <div className="flex h-[5px]">
          <div className="w-[184px] bg-[#4a6cc9]" />
          <div className="flex-1 bg-[#8abcf0]" />
        </div>
      </div>
      <div className="w-[84px] pl-[13px]">自习</div>
      <div className="mt-[9px] h-8 w-[2px] bg-white/80" />
      <div className="w-[117px] pl-[15px] text-[20px]">周六 09/06</div>
      <div className="pl-[16px] text-[23.500px]">15:33:47</div>
    </div>
  );
}

/* ---------- viewer toolbar and taskbar ---------- */

const T = ({ children, w = "w-[44px]" }: { children: React.ReactNode; w?: string }) => (
  <div className={`flex shrink-0 items-center justify-center ${w}`}>
    <svg width="20" height="20" viewBox="0 0 20 20" fill="none" stroke="#e6e6e6" strokeWidth="1.500" strokeLinecap="round" strokeLinejoin="round">
      {children}
    </svg>
  </div>
);

function ViewerToolbar() {
  return (
    <div className="relative flex h-[49px] items-center rounded-t-[8px] bg-[#111] pl-[713px]">
      <T><circle cx="8.500" cy="8.500" r="7" /><path d="M13.500 13.500L19 19M5.500 8.500h6" /></T>
      <div className="w-[55px] text-center font-['Noto_Sans'] text-[16px] font-bold text-[#e0e0e0]">89%</div>
      <T><circle cx="8.500" cy="8.500" r="7" /><path d="M13.500 13.500L19 19M5.500 8.500h6M8.500 5.500v6" /></T>
      <T><path d="M.8 2h18.400v16H.8z" /><path d="M5 7l1.500-.7V14M10 8.500v.1M10 12v.1M13 7l1.500-.7V14" strokeWidth="1.300" /></T>
      <div className="ml-[21px] mr-[23px] h-4 w-px bg-[#2c2c2c]" />
      <T><path d="M1.500 8h13v10.500h-13zM18 8q0-4.500-6-4.500M14.500 1L12 3.500 14.500 6" /></T>
      <T><path d="M3 15l1-4L14 1l3.500 3.500-10 10zM2 19h16" /></T>
      <T><path d="M1 5V1h4M15 1h4v4M19 15v4h-4M5 19H1v-4M6 15l4-10 4 10M7.500 11.500h5" /></T>
      <T><path d="M9 2H2v16.500h15V12M8 12q0-7 9-7M14 1.500L18 5l-4 3.500" /></T>
      <T><path d="M10 1v13M4 9l6 6 6-6M1 19h18" /></T>
      <T w="w-[43px]"><path d="M3 10v.1M10 10v.1M17 10v.1" strokeWidth="2.600" /></T>
      <div className={`absolute bottom-0 right-0 flex h-[22px] w-[152px] items-center bg-white pl-[12px] text-[16px] leading-none text-black ${UI}`}>
        <div className="absolute left-[4px] top-[2px] h-[18px] border-l border-dashed border-[#999]" />
        <div className="flex h-4 w-4 items-center justify-center border border-[#333] text-[13px]">M</div>
        <span className="ml-[6px]">中</span>
        <span className="ml-[6px]"><I w={14} h={16}><path d="M8 1q4 8-6 13 9 1 10-6 0-4-4-7z" stroke="#111" strokeWidth="1.200" /></I></span>
        <span className="ml-[4px]"><I w={14} h={16}><circle cx="3" cy="4" r="2" stroke="#111" /><path d="M9 8a2 2 0 1 1 3 2q-.5 3-3 4 1-2 1-3.500-1-1-1-2.500z" fill="#111" /></I></span>
        <span className="ml-[5px]">简</span>
        <span className="ml-[5px]">
          <I w={16} h={16}>
            <circle cx="8" cy="8" r="5.300" stroke="#111" strokeWidth="1.200" />
            <circle cx="8" cy="8" r="6.400" stroke="#111" strokeWidth="1.800" strokeDasharray="2.500 2.500" />
            <circle cx="8" cy="8" r="2" stroke="#111" />
          </I>
        </span>
        <span className="ml-[10px]"><I w={6} h={12}><path d="M1 1h4v2H1zM0 8h6l-3 3z" fill="#111" /></I></span>
      </div>
    </div>
  );
}

const Slot = ({ w, children, bar, on }: { w: string; children: React.ReactNode; bar?: React.ReactNode; on?: boolean }) => (
  <div className={`flex h-10 shrink-0 flex-col items-center ${w} ${on ? "bg-[#344951]" : ""}`}>
    <div className="flex h-[38px] items-center">{children}</div>
    {bar}
  </div>
);

function Taskbar() {
  return (
    <div className={`flex h-10 bg-[#00141d] text-white ${UI}`}>
      <Slot w="w-12">
        <I w={16} h={16}><path d="M0 2.300L6.500 1.400v6.100H0zM7.500 1.200L16 0v7.500H7.500zM0 8.500h6.500v6.100L0 13.700zM7.500 8.500H16V16l-8.500-1.200z" fill="#fff" /></I>
      </Slot>
      <Slot w="w-12">
        <I w={20} h={15}><path d="M4.500.700h11v13.600h-11zM3 2.700H.7v9.600H3M17 2.700h2.300v9.600H17" stroke="#fff" strokeWidth="1.200" /></I>
      </Slot>
      <Slot w="w-[54px]">
        <I w={24} h={22}>
          <path d="M1 5l20-4q2 0 2 2v16q0 2-2 2H4q-3 0-3-3z" fill="#4c5358" />
          <path d="M1 5l20-4q2 0 2 2v3L1 11z" fill="#7b8287" />
          <text x="1.500" y="14.500" fontSize="8" fill="#fff" fontFamily="Noto Sans" textLength="20" lengthAdjust="spacingAndGlyphs">Camera</text>
        </I>
      </Slot>
      <Slot w="w-[43px]">
        <I w={24} h={20}>
          <path d="M18 1l6 3v13l-6 2z" fill="#3c7d33" />
          <path d="M0 4l17-4q3 0 3 2v15q0 2-3 3H3q-3 0-3-3z" fill="#5cab4a" />
          <text x="3" y="14.500" fontSize="10" fontWeight="700" fill="#fff" fontFamily="Noto Sans">EN</text>
        </I>
      </Slot>
      <Slot w="w-[55px]">
        <I w={22} h={20}>
          <path d="M0 1h9l1 2h12v15H0z" fill="#fbe08a" />
          <path d="M2 1h6v2H2z" fill="#f0b400" />
          <path d="M4 18v-7q0-1 1-1h12q1 0 1 1v7h-4v-3H8v3z" fill="#3aaee8" />
        </I>
      </Slot>
      <Slot w="w-[44px]" bar={<div className="h-[2px] w-10 bg-[#76b9ed]" />}>
        <svg width="24" height="24" viewBox="0 0 24 24">
          <defs>
            <linearGradient id="eg" x1="0" y1="0" x2="1" y2=".4"><stop offset="0" stopColor="#2fb0e8" /><stop offset=".6" stopColor="#35c8c0" /><stop offset="1" stopColor="#69dc4b" /></linearGradient>
            <linearGradient id="eb" x1="0" y1="0" x2="0" y2="1"><stop offset="0" stopColor="#1a9be0" /><stop offset="1" stopColor="#0b4fb5" /></linearGradient>
          </defs>
          <circle cx="12" cy="12" r="12" fill="url(#eg)" />
          <path d="M0 12Q1 6 7 6q8 0 8 5-1-2-3-2-3 1-2 5 2 5 8 5 2 0 4-1-4 6-10 6Q0 24 0 12z" fill="url(#eb)" />
          <path d="M14 10q1 2 0 4 1 2 5 1.500 3-1 4.500-3L24 17l-2 2q-4 1-7 0-5-2-4-7 1-2 3-2z" fill="#00141d" />
        </svg>
      </Slot>
      <Slot w="w-[52px]" bar={<div className="flex h-[2px] w-10"><div className="w-[31px] bg-[#76b9ed]" /><div className="flex-1 bg-[#4d82ad]" /></div>}>
        <svg width="24" height="24" viewBox="0 0 24 24">
          <rect width="24" height="24" rx="4" fill="#fff" />
          <path d="M12 2q5 0 5 6l3 6q1 3 0 4l-2-2q-1 4-3 5H9q-2-1-3-5l-2 2q-1-1 0-4l3-6q0-6 5-6z" fill="#111" />
          <ellipse cx="12" cy="16" rx="4.500" ry="5" fill="#fff" />
          <ellipse cx="10.300" cy="6" rx="1.100" ry="1.700" fill="#fff" /><ellipse cx="13.700" cy="6" rx="1.100" ry="1.700" fill="#fff" />
          <ellipse cx="12" cy="9" rx="3" ry="1" fill="#f5a300" />
          <path d="M6 10.500q6 3 12 0l.5 2.500q-4 2-8 1.500V17H8v-3l-2-1z" fill="#e6161e" />
          <path d="M7 21h4v1H7zM13 21h4v1h-4z" fill="#f5a300" />
        </svg>
      </Slot>
      <Slot w="w-12" on bar={<div className="h-[2px] w-12 bg-[#76b9ed]" />}>
        <I w={22} h={22}>
          <path d="M12 3h10v16H12z" fill="#fff" />
          <path d="M14 5.500h3M18 5.500h3M14 8.500h3M18 8.500h3M14 11.500h3M18 11.500h3M14 14.500h3M18 14.500h3M14 17h3M18 17h3" stroke="#217346" strokeWidth="1.500" />
          <path d="M0 2.500L13 0v22L0 19.500z" fill="#1d7044" />
          <path d="M3.500 7l5 8M8.500 7l-5 8" stroke="#fff" strokeWidth="1.900" />
        </I>
      </Slot>
      <div className="flex-1" />
      <div className="flex items-center">
        <div className="flex w-8 justify-center"><I w={12} h={7}><path d="M1 6l5-5 5 5" stroke="#fff" strokeWidth="1.200" /></I></div>
        <div className="flex w-8 justify-center"><I w={16} h={14}><path d="M4.500 1.500h11v8h-11M10 9.500v3M6.500 12.500h7M.5.500h4v4h-4zM2.500 4.500v8" stroke="#fff" strokeWidth="1.100" /></I></div>
        <div className="flex w-8 justify-center"><I w={16} h={16}><path d="M7.500 0L14 2v6q-1 5-6.500 7.500Q2 13 1 8V2z" fill="#fff" /><path d="M7.500 0v15M1 7.500h13" stroke="#00141d" /><path d="M11 7l5 9H6z" fill="#f7c325" /><path d="M11 10v3M11 14v1" stroke="#222" /></I></div>
        <div className="flex w-8 justify-center"><I w={16} h={14}><path d="M.7 5h2.500L7 1.500v11L3.200 9H.7zM10 5l4 4M14 5l-4 4" stroke="#fff" strokeWidth="1.100" /></I></div>
        <div className="flex w-[38px] justify-center"><I w={18} h={16}><path d="M12 1q2 0 1 3l-5 8-2 1 .5-2.500zM6 12q-5 4-4 1t7-5 7 1-4 2" stroke="#fff" strokeWidth="1.100" /></I></div>
        <div className="flex w-[42px] justify-center"><I w={22} h={14}><path d="M.5.500h21v13H.5z" stroke="#fff" /><path d="M3 4h16M3 7h16" stroke="#fff" strokeWidth="1.300" strokeDasharray="1.500 1.500" /><path d="M6 10.500h10" stroke="#fff" strokeWidth="1.200" /></I></div>
        <div className="flex w-[38px] justify-center"><I w={14} h={13}><path d="M.5.500h13v12H.5zM.5 7.500h13M7 7.500v5" stroke="#fff" /></I></div>
        <div className="w-[78px] pr-px text-center text-[12px] leading-[19px]">
          <div>15:33</div>
          <div>2025/9/6</div>
        </div>
        <div className="relative flex w-[46px] justify-center pr-[10px]">
          <I w={18} h={18}><path d="M1 0h16v12h-5l-4 5v-5H1z" fill="#fff" /><path d="M4 3.500h10M4 6h10M4 8.500h10" stroke="#00141d" strokeWidth="1.200" /></I>
          <div className="absolute left-[16px] top-[7px] flex h-4 w-4 items-center justify-center rounded-full border border-[#9aa] bg-[#2a3438] text-[11px] leading-none">1</div>
        </div>
        <div className="h-10 w-px bg-[#45545a]" />
        <div className="w-[3px]" />
      </div>
    </div>
  );
}

export default function App() {
  return (
    <div className="relative flex h-[1080px] w-[1920px] flex-col overflow-hidden bg-[#1c1c1c]">
      <div className="flex h-7 shrink-0 items-center justify-end bg-[#131313]">
        <div className="h-px w-[10px] bg-[#ddd]" />
        <div className="ml-[20px]"><I w={14} h={12}><path d="M.7 3.500h9v8h-9zM4 3V.7h9.300v8H10" stroke="#fff" strokeWidth="1.200" /></I></div>
        <div className="ml-[21px] mr-[11px]"><I w={10} h={10}><path d="M1 1l8 8M9 1L1 9" stroke="#fff" strokeWidth="1.200" /></I></div>
      </div>
      <div className="ml-[105px] h-[962px] w-[1710px] shrink-0 bg-white" />
      <div className="h-px shrink-0" />
      <ViewerToolbar />
      <Taskbar />
      <Whiteboard />
      <QQWindow />
      <ExcelWindow />
      <SchedulePill />
    </div>
  );
}
